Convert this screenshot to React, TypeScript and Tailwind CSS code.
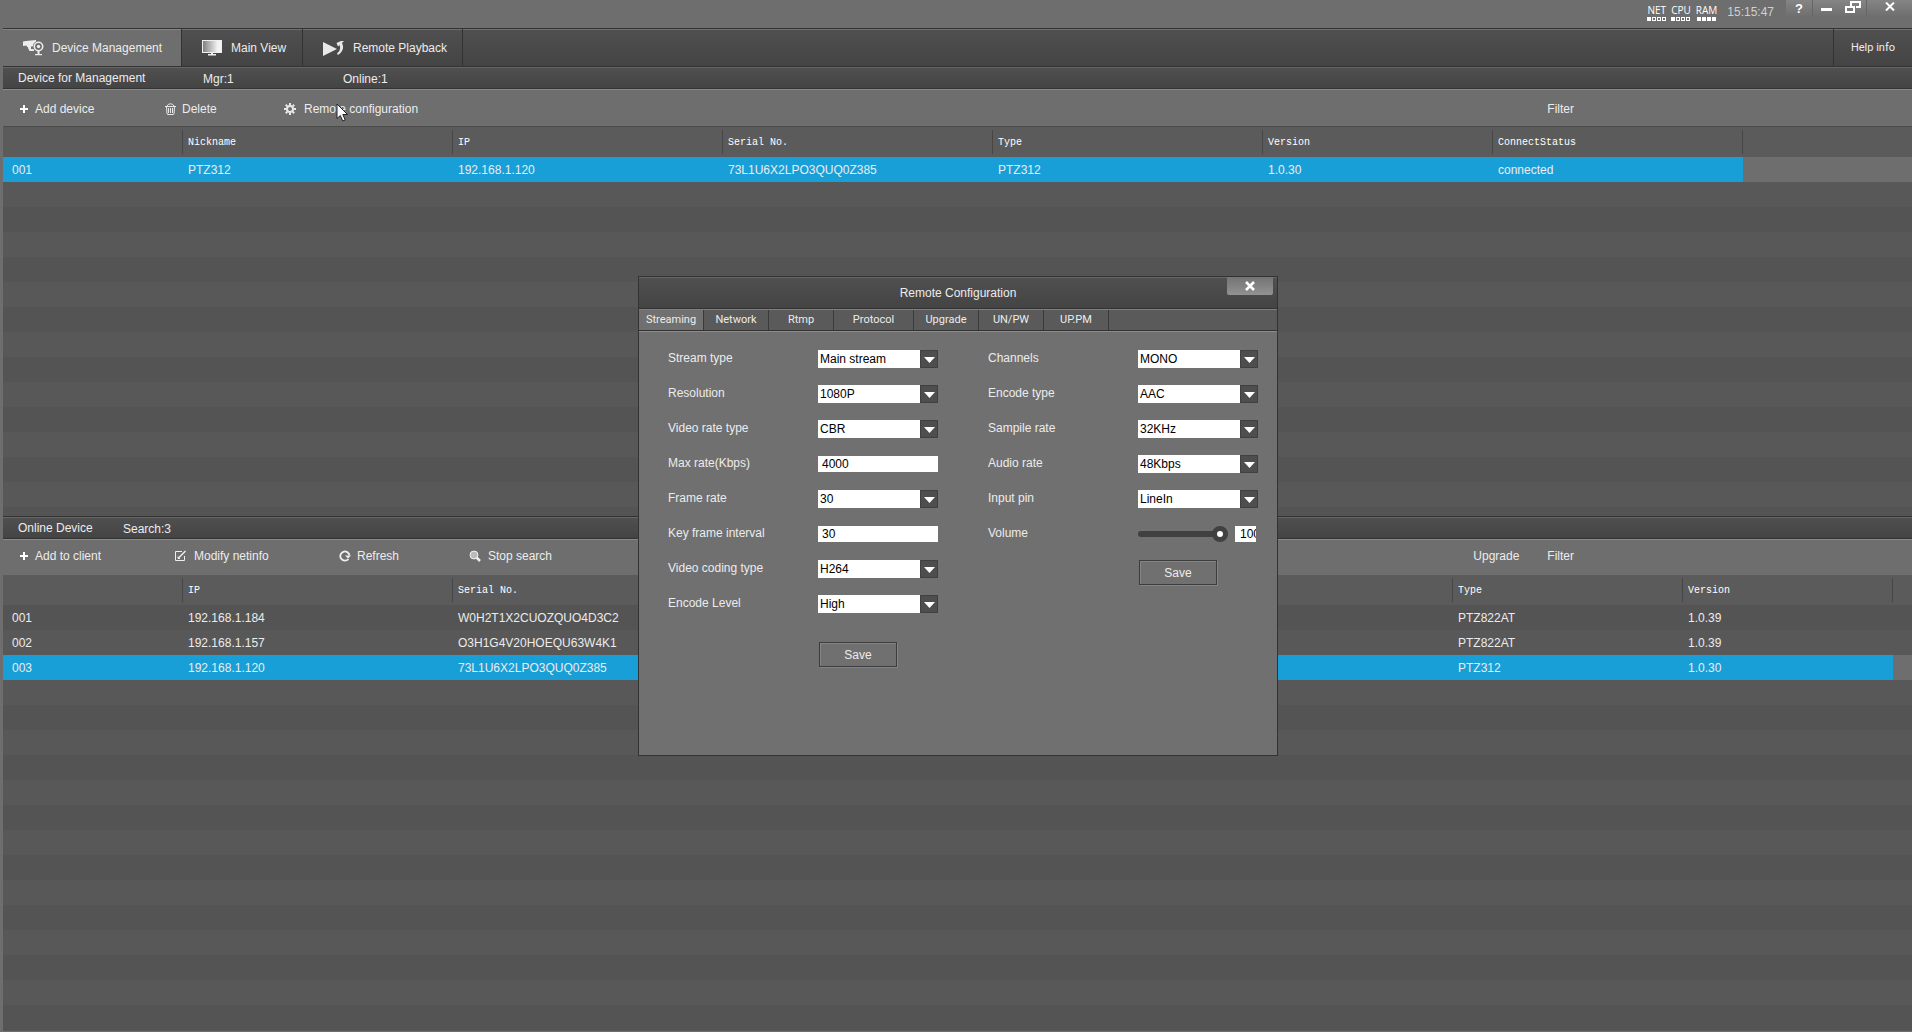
import React from "react";

type Column = { label: string; width: string };
type Field = { id: string; label: string; value: string; text?: boolean };

const deviceColumns: Column[] = [
  { label: "", width: "w-[180px]" },
  { label: "Nickname", width: "w-[270px]" },
  { label: "IP", width: "w-[270px]" },
  { label: "Serial No.", width: "w-[270px]" },
  { label: "Type", width: "w-[270px]" },
  { label: "Version", width: "w-[230px]" },
  { label: "ConnectStatus", width: "w-[250px]" },
];

const onlineColumns: Column[] = [
  { label: "", width: "w-[180px]" },
  { label: "IP", width: "w-[270px]" },
  { label: "Serial No.", width: "w-[1000px]" },
  { label: "Type", width: "w-[230px]" },
  { label: "Version", width: "w-[210px]" },
];

const deviceRows = [
  ["001", "PTZ312", "192.168.1.120", "73L1U6X2LPO3QUQ0Z385", "PTZ312", "1.0.30", "connected"],
];

const onlineRows = [
  ["001", "192.168.1.184", "W0H2T1X2CUOZQUO4D3C2", "PTZ822AT", "1.0.39"],
  ["002", "192.168.1.157", "O3H1G4V20HOEQU63W4K1", "PTZ822AT", "1.0.39"],
  ["003", "192.168.1.120", "73L1U6X2LPO3QUQ0Z385", "PTZ312", "1.0.30"],
];

const videoFields: Field[] = [
  { id: "stream-type", label: "Stream type", value: "Main stream" },
  { id: "resolution", label: "Resolution", value: "1080P" },
  { id: "rate-type", label: "Video rate type", value: "CBR" },
  { id: "max-rate", label: "Max rate(Kbps)", value: "4000", text: true },
  { id: "frame-rate", label: "Frame rate", value: "30" },
  { id: "key-frame", label: "Key frame interval", value: "30", text: true },
  { id: "coding-type", label: "Video coding type", value: "H264" },
  { id: "encode-level", label: "Encode Level", value: "High" },
];

const audioFields: Field[] = [
  { id: "channels", label: "Channels", value: "MONO" },
  { id: "encode-type", label: "Encode type", value: "AAC" },
  { id: "sample-rate", label: "Sampile rate", value: "32KHz" },
  { id: "audio-rate", label: "Audio rate", value: "48Kbps" },
  { id: "input-pin", label: "Input pin", value: "LineIn" },
];

const dialogTabs = [
  { label: "Streaming", width: "w-[65px]" },
  { label: "Network", width: "w-[65px]" },
  { label: "Rtmp", width: "w-[65px]" },
  { label: "Protocol", width: "w-[80px]" },
  { label: "Upgrade", width: "w-[65px]" },
  { label: "UN/PW", width: "w-[65px]" },
  { label: "UP.PM", width: "w-[65px]" },
];

function CameraIcon() {
  return (
    <svg width="22" height="16" viewBox="0 0 22 16" fill="#ececec">
      <path d="M0 1.500 L3 1 L13 0 V6 L4 7 L3.500 5.500 L0 6 Z" />
      <path d="M5 6h3v3h3v2H6.500L5 8Z" />
      <circle cx="15.500" cy="6.500" r="5.600" fill="#6c6c6c" />
      <circle cx="15.500" cy="6.500" r="4.200" fill="none" stroke="#ececec" strokeWidth="1.600" />
      <circle cx="15.500" cy="6.500" r="1.700" />
      <path d="M14.500 11h2v3h2.500v1.200h-7V14h2.500Z" />
    </svg>
  );
}

function MonitorIcon() {
  return (
    <svg width="20" height="16" viewBox="0 0 20 16">
      <defs>
        <linearGradient id="screen" x1="0" y1="0" x2="1" y2="0">
          <stop offset="0" stopColor="#7c7c7c" />
          <stop offset="0.800" stopColor="#f4f4f4" />
        </linearGradient>
      </defs>
      <rect x="0.5" y="0.5" width="19" height="12" fill="url(#screen)" stroke="#efefef" />
      <path d="M9 13h2v1h3v1.500H6V14h3Z" fill="#efefef" />
    </svg>
  );
}

function PlaybackIcon() {
  return (
    <svg width="21" height="15" viewBox="0 0 21 15" fill="#e8e8e8">
      <path d="M0 1 L14 8 L0 15Z" />
      <path d="M13.500 2 L18 0 H21 L19 2 Q22.500 9 15 14 L14 12.500 Q18.500 9 16.500 4 L15 5.500Z" />
    </svg>
  );
}

function PlusIcon() {
  return (
    <svg width="8" height="8" viewBox="0 0 8 8" fill="#fff">
      <path d="M3 0h2v3h3v2H5v3H3V5H0V3h3Z" />
    </svg>
  );
}

function TrashIcon() {
  return (
    <svg width="11" height="12" viewBox="0 0 11 12" fill="none" stroke="#e8e8e8">
      <path d="M0 3.500h11M2 3Q3 .8 5.500 .8T9 3M1.500 4l.5 6.500q0 1 1 1h5q1 0 1-1L9.500 4M3.500 5v5M5.500 5v5M7.500 5v5" />
    </svg>
  );
}

function GearIcon() {
  return (
    <svg width="12" height="12" viewBox="0 0 12 12" fill="none" stroke="#e8e8e8">
      <circle cx="6" cy="6" r="3" strokeWidth="2" />
      <path d="M6 0v2M6 10v2M0 6h2M10 6h2M1.800 1.800l1.400 1.400M8.800 8.800l1.400 1.400M10.200 1.800L8.800 3.200M3.200 8.800l-1.400 1.400" strokeWidth="2" />
    </svg>
  );
}

function EditIcon() {
  return (
    <svg width="13" height="12" viewBox="0 0 13 12" fill="none" stroke="#eee">
      <path d="M8 1.500H1.500v9h9V6" />
      <path d="M4.500 8L11.500 1" strokeWidth="1.500" />
      <path d="M4 6.500V8.500H6" />
    </svg>
  );
}

function RefreshIcon() {
  return (
    <svg width="12" height="12" viewBox="0 0 12 12">
      <path d="M9.500 9A4.600 4.600 0 1 1 10.500 5.500" fill="none" stroke="#eee" strokeWidth="1.800" />
      <path d="M6 5.500h6L9 8.500Z" fill="#eee" />
    </svg>
  );
}

function SearchIcon() {
  return (
    <svg width="12" height="12" viewBox="0 0 12 12">
      <circle cx="5" cy="5" r="4" fill="#bbb" stroke="#eee" />
      <path d="M7.500 7.500L11 11" stroke="#eee" strokeWidth="2.500" />
    </svg>
  );
}

function Meter({ label, filled }: { label: string; filled: number }) {
  return (
    <div className="flex flex-col items-center">
      <span className="font-['Open_Sans',sans-serif] text-[10px] leading-[13px] text-white">{label}</span>
      <div className="flex gap-px">
        {[0, 1, 2, 3].map((n) => (
          <span key={n} className={`size-1 border border-white ${n < filled ? "bg-white" : ""}`} />
        ))}
      </div>
    </div>
  );
}

function TitleBar() {
  return (
    <header className="flex h-7 items-start justify-end bg-[#6e6e6e]">
      <div className="flex gap-[5px] pt-1">
        <Meter label="NET" filled={1} />
        <Meter label="CPU" filled={1} />
        <Meter label="RAM" filled={4} />
      </div>
      <time className="ml-[10px] pt-1 text-[#d0d0d0]">15:15:47</time>
      <div className="ml-3 flex h-[17px] bg-linear-to-b from-[#858585] to-[#6e6e6e]">
        <button aria-label="Help" className="w-[27px] border-r border-[#666] text-[13px] leading-[13px] font-bold text-white">
          ?
        </button>
        <button aria-label="Minimize" className="flex w-[27px] justify-center pt-2">
          <span className="h-[3px] w-[11px] bg-white" />
        </button>
        <button aria-label="Restore" className="flex w-[27px] justify-center border-r border-[#666] pt-px">
          <svg width="16" height="12" viewBox="0 0 16 12" fill="none" stroke="#fff" strokeWidth="2">
            <path d="M6 5V1h9v5h-4M1 6h8v5H1Z" />
          </svg>
        </button>
        <button aria-label="Close" className="flex w-[45px] justify-center pt-[2px]">
          <svg width="10" height="9" viewBox="0 0 10 9" stroke="#fff" strokeWidth="2">
            <path d="M1 0.500L9 8.500M9 0.500L1 8.500" />
          </svg>
        </button>
      </div>
    </header>
  );
}

function MainTabs() {
  return (
    <nav className="flex h-[39px] border-y border-[#333] bg-linear-to-b from-[#505050] to-[#444] shadow-[inset_0_1px_0_#707070]">
      <button className="flex w-[179px] items-center gap-[7px] border-r border-[#333] bg-[#6e6e6e] pt-px pl-5 shadow-[inset_0_1px_0_#868686]">
        <CameraIcon />
        Device Management
      </button>
      <button className="flex w-[121px] items-center gap-[9px] border-r border-[#333] pt-px pl-5">
        <MonitorIcon />
        Main View
      </button>
      <button className="flex w-40 items-center gap-[9px] border-r border-[#333] pt-px pl-5">
        <PlaybackIcon />
        Remote Playback
      </button>
      <a href="#help" className="ml-auto flex w-[79px] items-center justify-center border-l border-[#333] font-['Roboto',sans-serif] text-[11px]">
        Help info
      </a>
    </nav>
  );
}

function SectionBar({ children }: { children: React.ReactNode }) {
  return (
    <div className="flex h-[22px] items-center border-b border-[#333] bg-linear-to-b from-[#505050] to-[#444] pl-[15px] shadow-[inset_0_1px_0_#666]">
      {children}
    </div>
  );
}

function ToolButton({ icon, label, className }: { icon: React.ReactNode; label: string; className: string }) {
  return (
    <button className={`flex items-center ${className}`}>
      {icon}
      {label}
    </button>
  );
}

function DeviceTable({ columns, rows, selected }: { columns: Column[]; rows: string[][]; selected: number }) {
  return (
    <table className="w-full table-fixed border-collapse text-left">
      <thead>
        <tr className="h-[30px] bg-[#5b5b5b]">
          {columns.map((c, i) => (
            <th key={i} className={`${c.width} py-[2px] pr-0 font-['Liberation_Mono',monospace] text-[10px] font-normal text-white`}>
              <div className="flex h-6 items-center border-r border-[#464646] pt-[2px] pl-[5px]">{c.label}</div>
            </th>
          ))}
          <th />
        </tr>
      </thead>
      <tbody>
        {rows.map((row, i) => (
          <tr key={row[0]} className={i === selected ? "h-[25px] bg-[#6e6e6e]" : "h-[25px]"}>
            {row.map((cell, j) => (
              <td key={j} className={`py-0 ${j === 0 ? "pl-[9px]" : "pl-[5px]"} ${i === selected ? "bg-[#189fd8]" : ""}`}>
                {cell}
              </td>
            ))}
            <td />
          </tr>
        ))}
      </tbody>
    </table>
  );
}

function FieldRow({ id, label, children }: { id: string; label: string; children: React.ReactNode }) {
  return (
    <div className="flex h-[18px] items-center">
      <label htmlFor={id} className="w-[150px] self-start leading-4">
        {label}
      </label>
      {children}
    </div>
  );
}

function FieldControl({ id, value, text }: Field) {
  if (text) {
    return <input id={id} defaultValue={value} className="h-4 w-[120px] bg-white pl-1 text-black" />;
  }
  return (
    <div className="relative flex">
      <select id={id} className="h-[18px] w-[120px] appearance-none border-r-[18px] border-[#4e4e4e] bg-white pl-[2px] leading-[18px] text-black">
        <option>{value}</option>
      </select>
      <svg className="pointer-events-none absolute top-0 right-0" width="18" height="18" viewBox="0 0 18 18">
        <path d="M.5 .5h17v17H.5Z" fill="none" stroke="#404040" />
        <path d="M4 7h11L9.500 13Z" fill="#fff" />
      </svg>
    </div>
  );
}

function SaveButton({ className }: { className: string }) {
  return (
    <button className={`ml-[151px] h-[25px] w-[78px] border border-[#3c3c3c] shadow-[1px_1px_0_#858585,inset_1px_1px_0_#858585] ${className}`}>
      Save
    </button>
  );
}

function RemoteConfigDialog() {
  return (
    <section role="dialog" aria-label="Remote Configuration" className="flex h-[480px] w-[640px] flex-col border border-[#333] bg-[#707070]">
      <div className="relative flex h-8 items-center justify-center border-b border-[#333] bg-linear-to-b from-[#505050] to-[#444] shadow-[inset_0_1px_0_#666]">
        <h2>Remote Configuration</h2>
        <button aria-label="Close dialog" className="absolute top-0 right-[4px] flex h-[18px] w-[46px] items-center justify-center rounded-b-xs bg-linear-to-b from-[#747474] to-[#929292]">
          <svg width="10" height="10" viewBox="0 0 10 10" stroke="#fff" strokeWidth="2.500">
            <path d="M1 1L9 9M9 1L1 9" />
          </svg>
        </button>
      </div>
      <div className="flex h-[22px] border-t border-b border-t-[#808080] border-b-[#333] bg-[#5a5a5a] font-['Roboto',sans-serif] text-[11px]">
        {dialogTabs.map((tab, i) => (
          <button key={tab.label} className={`${tab.width} border-r border-[#3a3a3a] ${i === 0 ? "bg-[#707070]" : ""}`}>
            {tab.label}
          </button>
        ))}
      </div>
      <div className="flex flex-1 border-t border-[#8c8c8c] pt-[18px] pl-[29px]">
        <form className="flex w-80 flex-col gap-[17px]">
          {videoFields.map((f) => (
            <FieldRow key={f.id} id={f.id} label={f.label}>
              <FieldControl {...f} />
            </FieldRow>
          ))}
          <SaveButton className="mt-3" />
        </form>
        <form className="flex flex-1 flex-col gap-[17px]">
          {audioFields.map((f) => (
            <FieldRow key={f.id} id={f.id} label={f.label}>
              <FieldControl {...f} />
            </FieldRow>
          ))}
          <FieldRow id="volume" label="Volume">
            <input
              id="volume"
              type="range"
              defaultValue={100}
              className="h-[6px] w-[90px] appearance-none rounded-full bg-[#404040] [&::-webkit-slider-thumb]:size-4 [&::-webkit-slider-thumb]:appearance-none [&::-webkit-slider-thumb]:rounded-full [&::-webkit-slider-thumb]:border-5 [&::-webkit-slider-thumb]:border-[#404040] [&::-webkit-slider-thumb]:bg-white"
            />
            <input aria-label="Volume value" defaultValue="100" className="ml-[7px] h-4 w-[21px] bg-white pl-[5px] text-black" />
          </FieldRow>
          <SaveButton className="" />
        </form>
      </div>
    </section>
  );
}

export default function App() {
  return (
    <div className="relative flex min-h-screen flex-col bg-[#6e6e6e] font-['Liberation_Sans',Arial,sans-serif] text-[12px] leading-4 text-[#ececec]">
      <TitleBar />
      <div className="flex flex-1 flex-col pl-[3px]">
        <MainTabs />
        <SectionBar>
          <h1 className="w-[185px]">Device for Management</h1>
          <span className="w-[140px] pt-[2px]">Mgr:1</span>
          <span className="pt-[2px]">Online:1</span>
        </SectionBar>
        <div className="flex h-[38px] items-center border-t border-b border-t-[#8a8a8a] border-b-[#4c4c4c] pt-[2px] pl-[17px]">
          <ToolButton icon={<PlusIcon />} label="Add device" className="w-[145px] gap-[7px]" />
          <ToolButton icon={<TrashIcon />} label="Delete" className="w-[119px] gap-[6px]" />
          <ToolButton icon={<GearIcon />} label="Remote configuration" className="gap-2" />
          <button className="mr-[338px] ml-auto">Filter</button>
        </div>
        <div className="h-[389px] bg-[repeating-linear-gradient(#585858_0_25px,#545454_25px_50px)] bg-position-[0_5px]">
          <DeviceTable columns={deviceColumns} rows={deviceRows} selected={0} />
        </div>
        <div className="border-t border-[#333]">
          <SectionBar>
            <h2 className="w-[105px]">Online Device</h2>
            <span className="pt-[2px]">Search:3</span>
          </SectionBar>
        </div>
        <div className="flex h-9 items-center border-t border-[#8a8a8a] pb-1 pl-[17px]">
          <ToolButton icon={<PlusIcon />} label="Add to client" className="w-[154px] gap-[7px]" />
          <ToolButton icon={<EditIcon />} label="Modify netinfo" className="w-[165px] gap-[7px]" />
          <ToolButton icon={<RefreshIcon />} label="Refresh" className="w-[130px] gap-[6px]" />
          <ToolButton icon={<SearchIcon />} label="Stop search" className="gap-[7px]" />
          <div className="mr-[338px] ml-auto flex gap-7">
            <button>Upgrade</button>
            <button>Filter</button>
          </div>
        </div>
        <div className="flex-1 border-b border-[#6e6e6e] bg-[repeating-linear-gradient(#545454_0_25px,#585858_25px_50px)] bg-position-[0_30px]">
          <DeviceTable columns={onlineColumns} rows={onlineRows} selected={2} />
        </div>
      </div>
      <div className="pointer-events-none absolute inset-0 flex items-center justify-center pl-1">
        <div className="pointer-events-auto">
          <RemoteConfigDialog />
        </div>
      </div>
      <svg className="pointer-events-none absolute top-[103px] left-[336px]" width="13" height="20" viewBox="0 0 13 20">
        <path d="M1 1V15.500L4.300 12.500L6.800 18L9.200 17L6.800 11.500H11.500Z" fill="#fff" stroke="#222" />
      </svg>
    </div>
  );
}
